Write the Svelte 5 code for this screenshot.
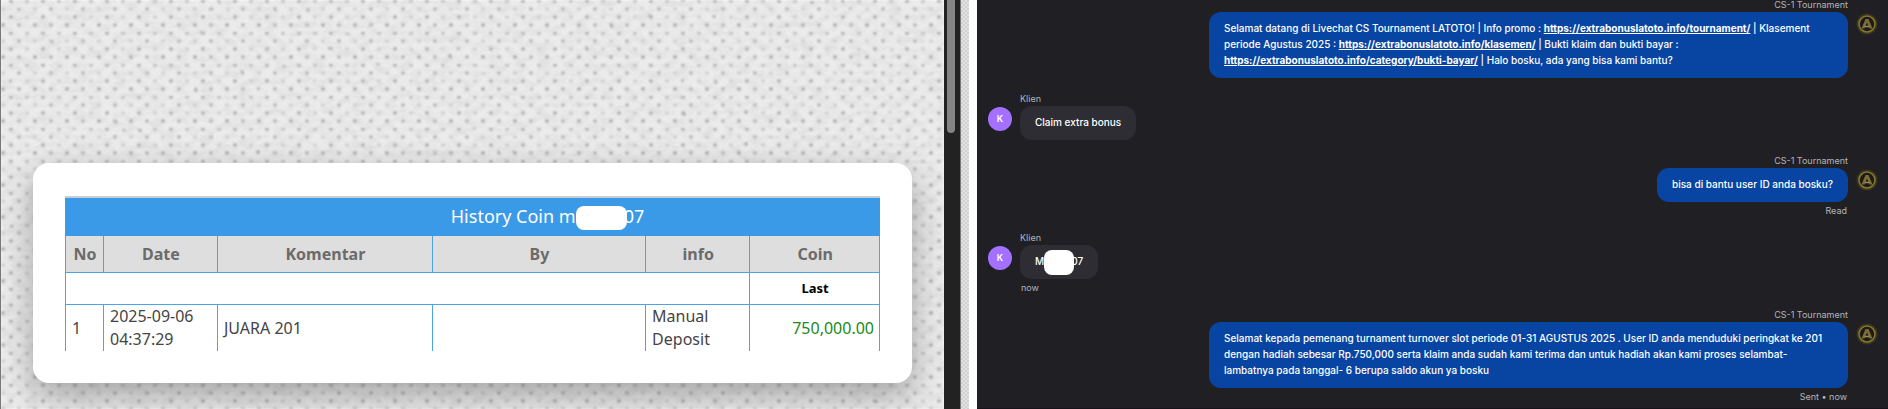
<script>
    const columns = ['No', 'Date', 'Komentar', 'By', 'info', 'Coin'];
    const rows = [
        { no: 1, date: '2025-09-06 04:37:29', comment: 'JUARA 201', by: '', info: 'Manual Deposit', coin: '750,000.00' },
    ];

    const messages = [
        {
            from: 'agent',
            name: 'CS-1 Tournament',
            parts: [
                { text: 'Selamat datang di Livechat CS Tournament LATOTO! | Info promo : ' },
                { link: 'https://extrabonuslatoto.info/tournament/' },
                { text: ' | Klasement periode Agustus 2025 : ' },
                { link: 'https://extrabonuslatoto.info/klasemen/' },
                { text: ' | Bukti klaim dan bukti bayar : ' },
                { link: 'https://extrabonuslatoto.info/category/bukti-bayar/' },
                { text: ' | Halo bosku, ada yang bisa kami bantu?' },
            ],
        },
        { from: 'client', name: 'Klien', parts: [{ text: 'Claim extra bonus' }] },
        { from: 'agent', name: 'CS-1 Tournament', parts: [{ text: 'bisa di bantu user ID anda bosku?' }], status: 'Read' },
        { from: 'client', name: 'Klien', parts: [{ text: 'M' }, { hidden: true }, { text: '07' }], status: 'now' },
        {
            from: 'agent',
            name: 'CS-1 Tournament',
            parts: [{ text: 'Selamat kepada pemenang turnament turnover slot periode 01-31 AGUSTUS 2025 . User ID anda menduduki peringkat ke 201 dengan hadiah sebesar Rp.750,000 serta klaim anda sudah kami terima dan untuk hadiah akan kami proses selambat-lambatnya pada tanggal- 6 berupa saldo akun ya bosku' }],
            status: 'Sent • now',
        },
    ];
</script>

<main>
    <section class="history">
        <svg class="fabric" aria-hidden="true">
            <defs>
                <pattern id="weave" width="32" height="32" patternUnits="userSpaceOnUse">
                    <g fill="#a6a6a6">
                        <circle cx="10" cy="1" r="2" />
                        <circle cx="26" cy="1" r="2" opacity=".7" />
                        <circle cx="2" cy="9" r="2" opacity=".4" />
                        <circle cx="18" cy="9" r="2" opacity=".8" />
                        <circle cx="10" cy="17" r="2" opacity=".9" />
                        <circle cx="26" cy="17" r="2" opacity=".4" />
                        <circle cx="2" cy="25" r="2" />
                        <circle cx="18" cy="25" r="2" opacity=".8" />
                    </g>
                </pattern>
                <filter id="soften" x="0" y="0" width="100%" height="100%">
                    <feTurbulence type="fractalNoise" baseFrequency=".03 .05" numOctaves="2" seed="4" result="noise" />
                    <feDisplacementMap in="SourceGraphic" in2="noise" scale="2" />
                    <feGaussianBlur stdDeviation="1" />
                </filter>
                <filter id="grain" x="0" y="0" width="100%" height="100%">
                    <feTurbulence type="fractalNoise" baseFrequency=".08 .14" numOctaves="3" seed="9" />
                    <feColorMatrix values="0 0 0 0 .6  0 0 0 0 .6  0 0 0 0 .6  .8 0 0 0 -.3" />
                </filter>
            </defs>
            <g filter="url(#soften)">
                <rect width="100%" height="100%" fill="#ebebeb" />
                <rect width="100%" height="100%" fill="url(#weave)" />
            </g>
            <rect width="100%" height="100%" filter="url(#grain)" />
        </svg>
        <div class="card">
            <table>
                <colgroup>
                    <col class="w-no" /><col class="w-date" /><col class="w-comment" />
                    <col class="w-by" /><col class="w-info" /><col class="w-coin" />
                </colgroup>
                <thead>
                    <tr class="title">
                        <th colspan="6">History Coin m<span class="mask wide"></span>07</th>
                    </tr>
                    <tr class="names">
                        {#each columns as column}
                            <th>{column}</th>
                        {/each}
                    </tr>
                </thead>
                <tbody>
                    <tr class="last">
                        <td colspan="5"></td>
                        <th>Last</th>
                    </tr>
                    {#each rows as row}
                        <tr class="entry">
                            <td>{row.no}</td>
                            <td>{row.date}</td>
                            <td>{row.comment}</td>
                            <td>{row.by}</td>
                            <td>{row.info}</td>
                            <td class="coin">{row.coin}</td>
                        </tr>
                    {/each}
                </tbody>
            </table>
        </div>
    </section>
    <div class="track"><div class="thumb"></div></div>
    <div class="strip"></div>
    <section class="chat">
        {#each messages as message}
            <article class={message.from}>
                {#if message.from === 'client'}
                    <span class="avatar letter">K</span>
                {:else}
                    <svg class="avatar" viewBox="0 0 22 22" aria-hidden="true">
                        <circle cx="11" cy="11" r="10.5" fill="#3a351c" />
                        <circle cx="11" cy="11" r="8" fill="#1c1b1c" stroke="#85772c" stroke-width="1.6" />
                        <path d="M5.5 15.5 9.5 6h3l4 9.5h-3l-2.5-6-2.5 6z" fill="#7d6b38" />
                        <path d="M8.5 13.500h5" stroke="#a08d4e" stroke-width="1.5" />
                    </svg>
                {/if}
                <div class="body">
                    <span class="name">{message.name}</span>
                    <p>
                        {#each message.parts as part}{#if part.link}<a href={part.link}>{part.link}</a>{:else if part.hidden}<span class="mask"></span>{:else}{part.text}{/if}{/each}
                    </p>
                    {#if message.status}
                        <span class="status">{message.status}</span>
                    {/if}
                </div>
            </article>
        {/each}
    </section>
</main>

<style>
    :global(body) {
        margin: 0;
        background: #fff;
    }
    main {
        display: grid;
        grid-template-columns: 944fr 17px 8px 919fr;
        height: 100vh;
        overflow: hidden;
    }
    .history {
        position: relative;
        display: flex;
        align-items: flex-end;
        box-sizing: border-box;
        padding: 0 32px 26px;
        border-left: 1px solid #777;
        overflow: hidden;
        font-family: "Noto Sans", "Open Sans", sans-serif;
    }
    .fabric {
        position: absolute;
        inset: 0;
        width: 100%;
        height: 100%;
    }
    .card {
        position: relative;
        flex: 1;
        padding: 33px 32px 32px;
        border-radius: 16px;
        background: #fff;
        box-shadow: 0 12px 32px rgba(0, 0, 0, .3);
    }
    table {
        width: 100%;
        table-layout: fixed;
        border-collapse: collapse;
        border-top: 2px solid #c9cdd1;
        color: #444;
        font-size: 16px;
        line-height: 23px;
    }
    .w-no { width: 38px; }
    .w-date { width: 14%; }
    .w-comment { width: 26.4%; }
    .w-by { width: 26.2%; }
    .w-info { width: 12.8%; }
    th, td {
        padding: 0 5px 0 6px;
        border: 1px solid #4ba3e8;
        text-align: left;
    }
    th {
        text-align: center;
    }
    .title th {
        height: 37px;
        padding-left: 155px;
        border-color: #3b9ae8;
        background: #3b9ae8;
        color: #fff;
        font-size: 18px;
        font-weight: 400;
    }
    .names th {
        height: 36px;
        background: #dedede;
        color: #6b6b6b;
    }
    .last th, .last td {
        height: 31px;
        color: #000;
        font-size: 13px;
    }
    .entry td {
        height: 46px;
        border-bottom: 0;
    }
    .entry .coin {
        color: #208a20;
        text-align: right;
    }
    .mask {
        display: inline-block;
        width: 30px;
        height: 25px;
        margin: -6px -3px -6px 0;
        border-radius: 8px;
        background: #fff;
        vertical-align: middle;
    }
    .mask.wide {
        width: 51px;
        height: 24px;
    }
    .track {
        box-sizing: border-box;
        padding: 0 5px 0 3px;
        border-right: 1px solid #777;
        background: #222;
    }
    .thumb {
        height: 133px;
        border-radius: 0 0 5px 5px;
        background: #848484;
    }
    .strip {
        background: repeating-conic-gradient(#d0d0d0 0 25%, #e2e2e2 0 50%) 0 0 / 4px 4px;
    }
    .chat {
        margin-left: 8px;
        padding: 0 10px 0 11px;
        background: #202024;
        border-bottom: 1px solid #17121b;
        color: #b4b4bb;
        font-family: Inter, sans-serif;
        font-size: 9px;
        line-height: 12px;
    }
    article {
        display: flex;
        gap: 8px;
        margin-top: 14px;
    }
    article:first-child {
        margin-top: -2px;
    }
    .agent {
        flex-direction: row-reverse;
    }
    .avatar {
        flex: none;
        width: 22px;
        height: 22px;
        margin-top: 15px;
    }
    .letter {
        width: 24px;
        height: 24px;
        border-radius: 50%;
        background: #a370ff;
        color: #fff;
        font-weight: 600;
        line-height: 24px;
        text-align: center;
    }
    .body {
        display: flex;
        flex-direction: column;
        align-items: flex-start;
        max-width: 639px;
    }
    .agent .body {
        align-items: flex-end;
    }
    .name {
        line-height: 14px;
    }
    p {
        margin: 0;
        padding: 8px 15px 10px;
        border-radius: 12px;
        background: #2d2d33;
        color: #fff;
        font-size: 10px;
        font-weight: 500;
        line-height: 16px;
    }
    .agent p {
        background: #0845a3;
    }
    a {
        color: inherit;
        font-weight: 700;
    }
    .status {
        margin: 3px 1px 0;
    }
</style>
